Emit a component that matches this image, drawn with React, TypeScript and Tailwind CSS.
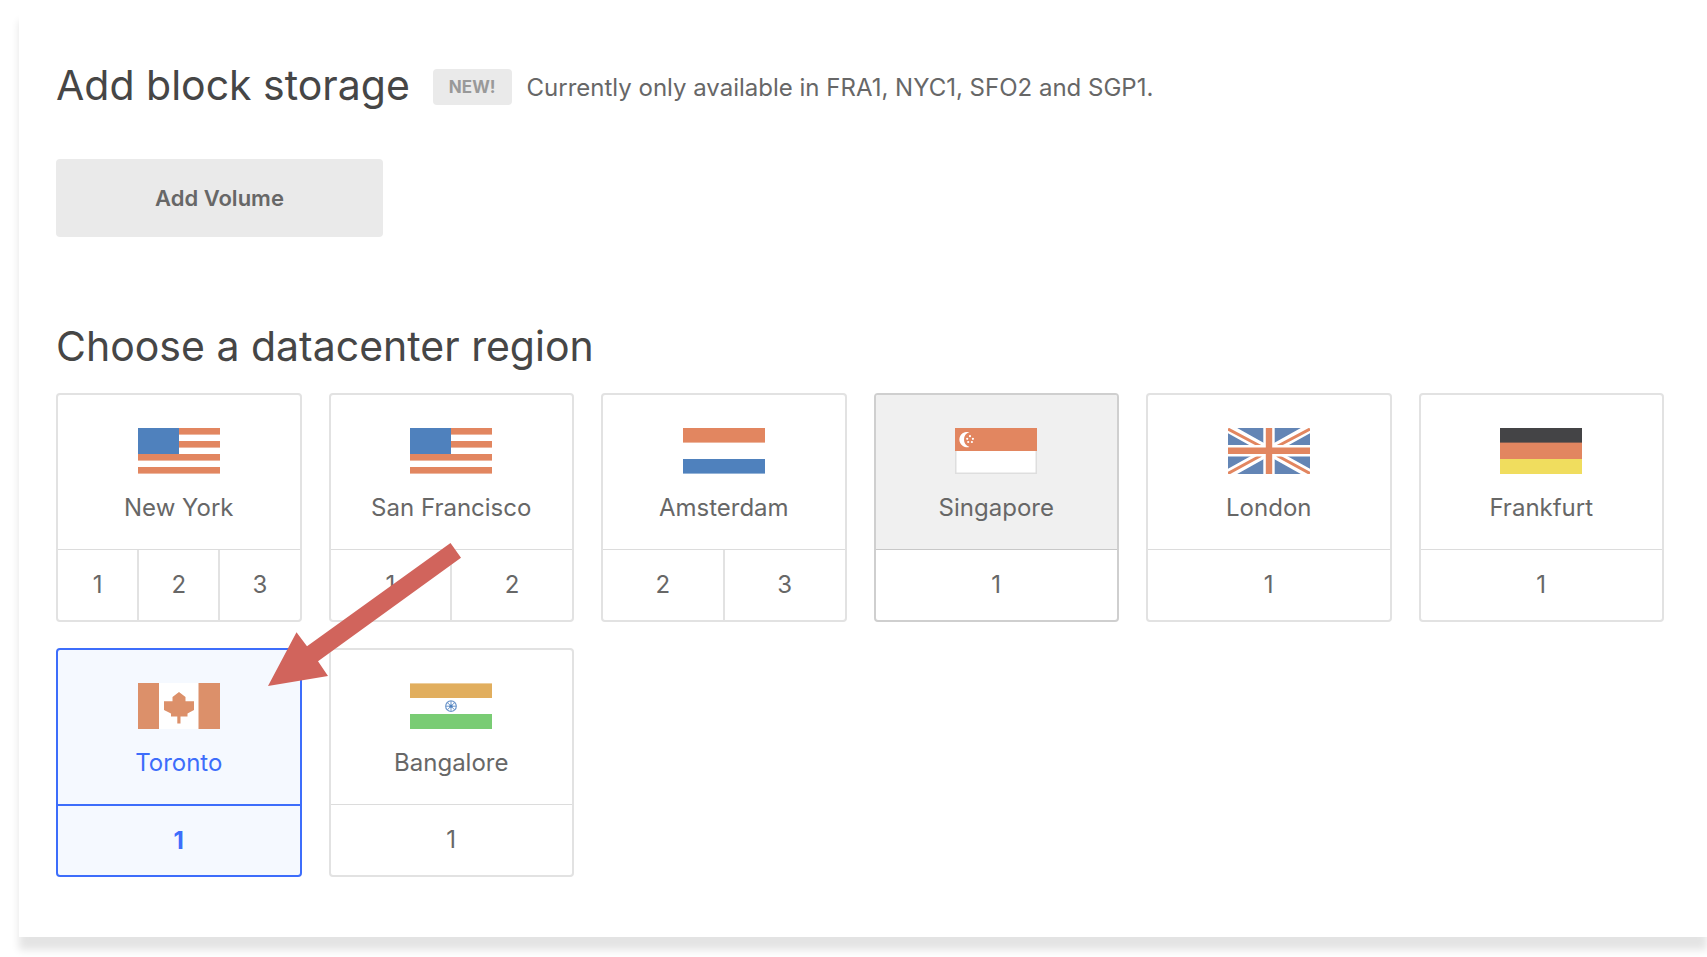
import { useState } from "react";
import type { ReactNode } from "react";

const flagClass = "h-[46px] w-[82px]";

function UsFlag() {
  return (
    <svg viewBox="0 0 82 46" className={flagClass} aria-hidden="true">
      <rect width="82" height="46" fill="#fff" />
      {[0, 13, 26, 39].map((y) => (
        <rect key={y} y={y} width="82" height="6.6" fill="#e28660" />
      ))}
      <rect width="41" height="26" fill="#4f81bd" />
    </svg>
  );
}

function NlFlag() {
  return (
    <svg viewBox="0 0 82 46" className={flagClass} aria-hidden="true">
      <rect width="82" height="46" fill="#fff" />
      <rect width="82" height="14.6" fill="#e28660" />
      <rect y="31" width="82" height="14.6" fill="#4f81bd" />
    </svg>
  );
}

function SgFlag() {
  return (
    <svg viewBox="0 0 82 46" className={flagClass} aria-hidden="true">
      <rect x="0.75" y="0.75" width="80.5" height="44.5" fill="#fff" stroke="#dedede" strokeWidth="1.5" />
      <rect width="82" height="23" fill="#e28660" />
      <path d="M14.5 4.3A7.7 7.7 0 1 0 14.5 18.9A7.6 7.6 0 0 1 14.5 4.3Z" fill="#fff" />
      {[
        [15, 8.2],
        [12.2, 10.8],
        [17.9, 10.8],
        [13.2, 14],
        [16.9, 14],
      ].map(([x, y]) => (
        <circle key={`${x}-${y}`} cx={x} cy={y} r="1.1" fill="#fff" />
      ))}
    </svg>
  );
}

function UkFlag() {
  return (
    <svg viewBox="0 0 82 46" className={flagClass} aria-hidden="true">
      <rect width="82" height="46" fill="#6385b5" />
      <path d="M0 0L82 46M82 0L0 46" stroke="#fff" strokeWidth="9" />
      <path d="M0 1L33 18.5M82 1L49 18.5M0 45.5L33 27.5M82 45.5L49 27.5" stroke="#e28660" strokeWidth="3" />
      <path d="M41 0V46M0 22.8H82" stroke="#fff" strokeWidth="11.4" />
      <path d="M41 0V46M0 22.8H82" stroke="#e28660" strokeWidth="6.4" />
    </svg>
  );
}

function DeFlag() {
  return (
    <svg viewBox="0 0 82 46" className={flagClass} aria-hidden="true">
      <rect width="82" height="15" fill="#444446" />
      <rect y="14.6" width="82" height="16.4" fill="#e28660" />
      <rect y="31" width="82" height="15" fill="#f0dd5e" />
    </svg>
  );
}

function CaFlag() {
  return (
    <svg viewBox="0 0 82 46" className={flagClass} aria-hidden="true">
      <rect width="82" height="46" fill="#fff" />
      <rect width="21" height="46" fill="#dc906a" />
      <rect x="60.5" width="21.5" height="46" fill="#dc906a" />
      <path
        d="M41 9L47.5 14V18.3H56V27L49.5 30.5V33.5H42.5V40.5H39.3V33.5H33V30.5L26 27V18.3H34.5V14Z"
        fill="#dc906a"
      />
    </svg>
  );
}

function InFlag() {
  return (
    <svg viewBox="0 0 82 46" className={flagClass} aria-hidden="true">
      <rect width="82" height="46" fill="#fff" />
      <rect y="0.4" width="82" height="14.6" fill="#e1ae5e" />
      <rect y="31" width="82" height="15" fill="#79cc74" />
      <g stroke="#6e97cb" fill="none">
        <circle cx="41" cy="23.2" r="5.3" strokeWidth="1.2" />
        <path d="M41 18V28.4M35.8 23.2H46.2M37.3 19.5L44.7 26.9M44.7 19.5L37.3 26.9" strokeWidth="1" />
      </g>
      <circle cx="41" cy="23.2" r="1.6" fill="#4f81bd" />
    </svg>
  );
}

type Region = { name: string; flag: ReactNode; centers: number[]; hovered?: boolean };

const regions: Region[] = [
  { name: "New York", flag: <UsFlag />, centers: [1, 2, 3] },
  { name: "San Francisco", flag: <UsFlag />, centers: [1, 2] },
  { name: "Amsterdam", flag: <NlFlag />, centers: [2, 3] },
  { name: "Singapore", flag: <SgFlag />, centers: [1], hovered: true },
  { name: "London", flag: <UkFlag />, centers: [1] },
  { name: "Frankfurt", flag: <DeFlag />, centers: [1] },
  { name: "Toronto", flag: <CaFlag />, centers: [1] },
  { name: "Bangalore", flag: <InFlag />, centers: [1] },
];

type CardProps = {
  region: Region;
  selected: number | null;
  onSelect: (center: number) => void;
};

function RegionCard({ region, selected, onSelect }: CardProps) {
  const active = selected !== null;
  const frame = active
    ? "border-[#3d6dfb] bg-[#f5f9ff] text-[#3d6dfb]"
    : region.hovered
      ? "border-[#cfcfcf] text-[#676767]"
      : "border-[#e2e2e2] text-[#676767]";
  const divider = active
    ? "border-t-2 border-[#3d6dfb]"
    : region.hovered
      ? "border-t border-[#c8c8c8]"
      : "border-t border-[#dcdcdc]";
  return (
    <section aria-label={region.name} className={`flex flex-col overflow-hidden rounded border-2 ${frame}`}>
      <div className={`flex flex-col items-center pt-[33px] pb-[25px] ${region.hovered ? "bg-[#f0f0f0]" : ""}`}>
        {region.flag}
        <h3 className="mt-[18px] text-2xl leading-8">{region.name}</h3>
      </div>
      <div className={`flex h-[71px] divide-x-2 divide-[#e2e2e2] ${divider}`}>
        {region.centers.map((center) => (
          <button
            key={center}
            type="button"
            aria-label={`${region.name} ${center}`}
            aria-pressed={selected === center}
            onClick={() => onSelect(center)}
            className={`flex-1 cursor-pointer text-2xl leading-8 ${selected === center ? "font-bold" : ""}`}
          >
            {center}
          </button>
        ))}
      </div>
    </section>
  );
}

export default function App() {
  const [choice, setChoice] = useState({ name: "Toronto", center: 1 });
  return (
    <div className="overflow-hidden bg-white pb-5 font-['Inter',sans-serif]">
      <main className="mt-2 ml-[19px] bg-white pt-[52px] pr-[43px] pb-[60px] pl-[37px] shadow-[0_13px_8px_rgba(0,0,0,0.11)]">
        <header className="flex items-center gap-[23px]">
          <h1 className="text-[41px] leading-[50px] whitespace-nowrap text-[#464646]">Add block storage</h1>
          <div className="flex items-center gap-[15px] pt-1">
            <span className="rounded-sm bg-[#eaeaea] px-4 text-[17px] leading-9 font-bold text-[#999]">NEW!</span>
            <p className="pt-0.5 text-2xl leading-8 text-[#676767]">
              Currently only available in FRA1, NYC1, SFO2 and SGP1.
            </p>
          </div>
        </header>
        <button
          type="button"
          className="mt-[49px] block h-[78px] w-[327px] cursor-pointer rounded bg-[#eaeaea] text-[22px] font-semibold text-[#676767]"
        >
          Add Volume
        </button>

        <h2 className="mt-[84px] text-[41px] leading-[50px] text-[#464646]">Choose a datacenter region</h2>
        <div className="relative mt-[22px] grid grid-cols-6 gap-x-[27px] gap-y-[26px]">
          {regions.map((region) => (
            <RegionCard
              key={region.name}
              region={region}
              selected={choice.name === region.name ? choice.center : null}
              onSelect={(center) => setChoice({ name: region.name, center })}
            />
          ))}
          <svg
            viewBox="0 0 193 143"
            className="pointer-events-none absolute top-[150px] left-[212px] h-[143px] w-[193px]"
            aria-hidden="true"
          >
            <path d="M0 143L28.5 89.3L39 103.3L182.5 0L193 14.7L50 118.3L60 133Z" fill="#d1645c" />
          </svg>
        </div>
      </main>
    </div>
  );
}
